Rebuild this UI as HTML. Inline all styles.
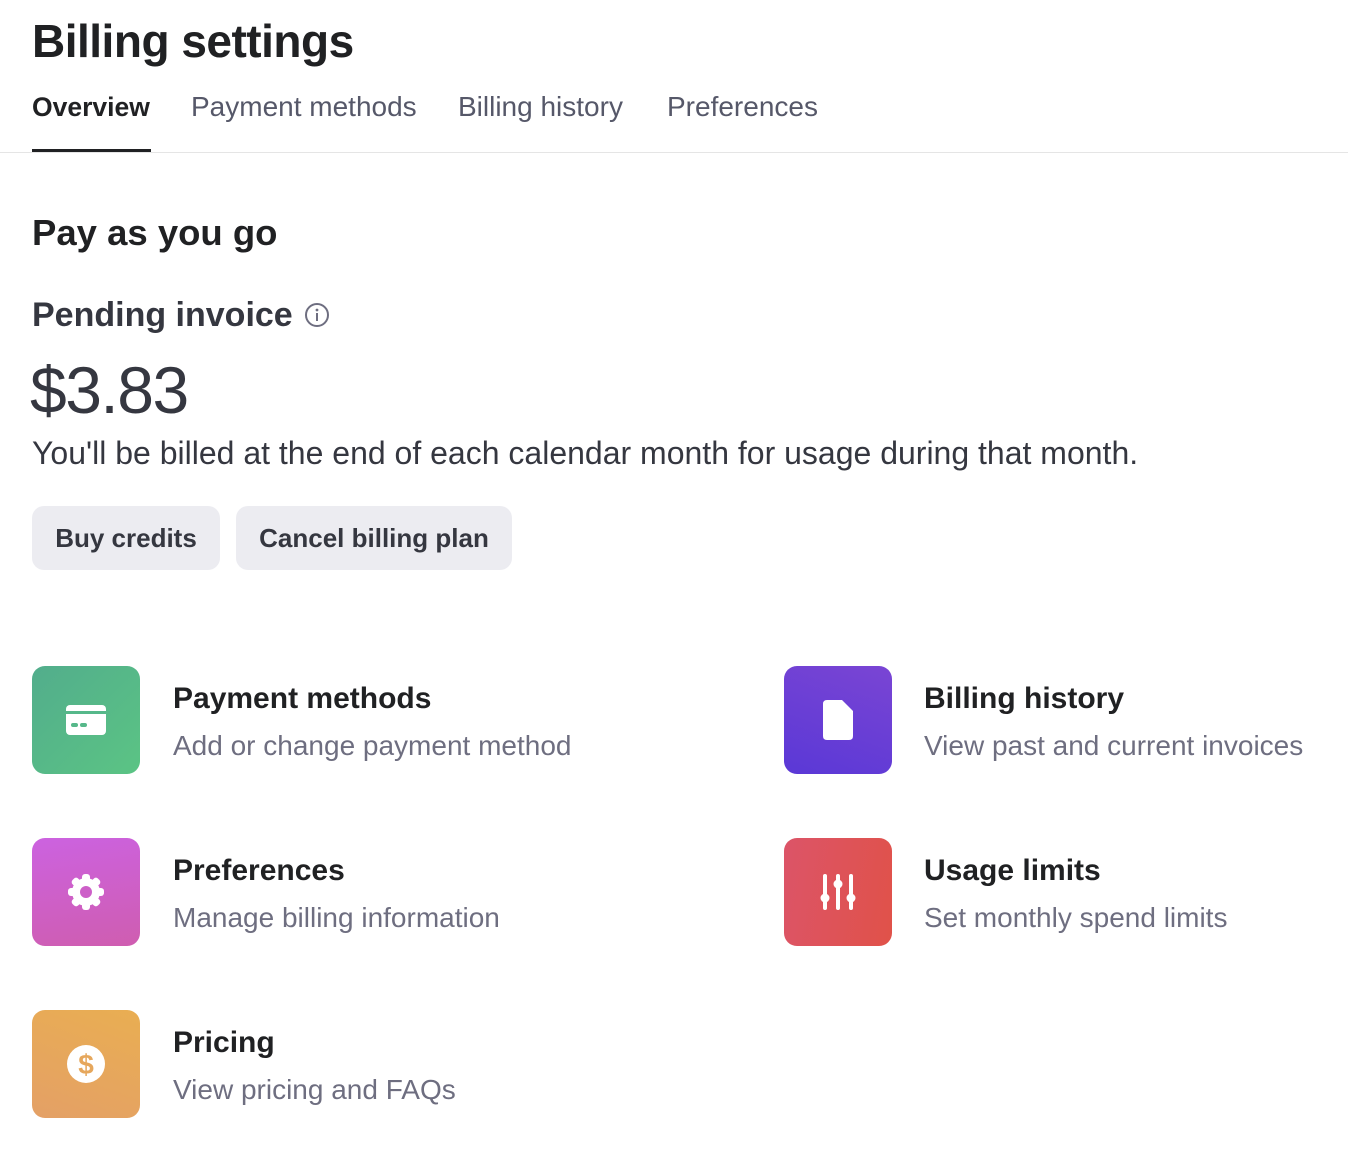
<!DOCTYPE html><html><head><style>
body{margin:0;width:1348px;height:1166px;background:#fff;font-family:"Liberation Sans",sans-serif;color:#202123;position:relative;overflow:hidden}
.a{position:absolute;white-space:nowrap}
.ic{position:absolute;width:108px;height:108px;border-radius:13px;display:flex;align-items:center;justify-content:center}
.t{font-size:30px;font-weight:bold;color:#202123}
.s{font-size:28px;color:#6e6e80}
.btn{position:absolute;top:506px;height:64px;border-radius:12px;background:#ececf1;font-size:26px;font-weight:bold;line-height:64px;text-align:center;color:#353740}
</style></head><body>
<div class="a" style="left:32px;top:14px;font-size:46px;font-weight:bold;letter-spacing:-0.5px">Billing settings</div>
<div class="a" style="left:32px;top:92px;font-size:26.5px;font-weight:bold">Overview</div>
<div class="a" style="left:191px;top:91px;font-size:28px;color:#565869">Payment methods</div>
<div class="a" style="left:458px;top:91px;font-size:28px;color:#565869">Billing history</div>
<div class="a" style="left:667px;top:91px;font-size:28px;color:#565869">Preferences</div>
<div class="a" style="left:32px;top:149px;width:119px;height:3px;background:#202123"></div>
<div class="a" style="left:0;top:152px;width:1348px;height:1px;background:#e5e5e5"></div>
<div class="a" style="left:32px;top:212px;font-size:36.5px;font-weight:bold">Pay as you go</div>
<div class="a" style="left:32px;top:296px;font-size:34px;font-weight:bold;color:#353740">Pending invoice</div>
<svg class="a" style="left:304px;top:302px" width="26" height="26" viewBox="0 0 26 26"><circle cx="13" cy="13" r="11" fill="none" stroke="#6e6e80" stroke-width="2"/><rect x="12" y="11" width="2" height="8" fill="#6e6e80"/><circle cx="13" cy="8" r="1.4" fill="#6e6e80"/></svg>
<div class="a" style="left:30px;top:352px;font-size:66px;color:#353740;letter-spacing:-1.5px">$3.83</div>
<div class="a" style="left:32px;top:435px;font-size:32px;color:#353740">You'll be billed at the end of each calendar month for usage during that month.</div>
<div class="btn" style="left:32px;width:188px">Buy credits</div>
<div class="btn" style="left:236px;width:276px">Cancel billing plan</div>

<div class="ic" style="left:32px;top:666px;background:linear-gradient(135deg,#52ad8c,#5bc484)"><svg width="40" height="30" viewBox="0 0 40 30"><rect x="0" y="0" width="40" height="30" rx="4" fill="#fff"/><rect x="0" y="6" width="40" height="3" fill="#56b88a"/><rect x="5" y="18" width="7" height="4" rx="2" fill="#56b88a"/><rect x="14" y="18" width="7" height="4" rx="2" fill="#56b88a"/></svg></div>
<div class="a t" style="left:173px;top:682px">Payment methods</div>
<div class="a s" style="left:173px;top:730px">Add or change payment method</div>

<div class="ic" style="left:784px;top:666px;background:linear-gradient(200deg,#7a45d4,#5a38d6)"><svg width="30" height="40" viewBox="0 0 30 40"><path d="M4 0H19L30 11V36Q30 40 26 40H4Q0 40 0 36V4Q0 0 4 0Z" fill="#fff"/></svg></div>
<div class="a t" style="left:924px;top:682px">Billing history</div>
<div class="a s" style="left:924px;top:730px">View past and current invoices</div>

<div class="ic" style="left:32px;top:838px;background:linear-gradient(170deg,#cc62e0,#cf5db0)"><svg width="40" height="40" viewBox="0 0 40 40"><g fill="#fff"><circle cx="20" cy="20" r="14"/><g id="k"><rect x="16" y="2" width="8" height="8" rx="3"/><rect x="16" y="30" width="8" height="8" rx="3"/></g><use href="#k" transform="rotate(45 20 20)"/><use href="#k" transform="rotate(90 20 20)"/><use href="#k" transform="rotate(135 20 20)"/></g><circle cx="20" cy="20" r="6" fill="#cd5fc8"/></svg></div>
<div class="a t" style="left:173px;top:854px">Preferences</div>
<div class="a s" style="left:173px;top:902px">Manage billing information</div>

<div class="ic" style="left:784px;top:838px;background:linear-gradient(100deg,#dc5468,#e05249)"><svg width="40" height="40" viewBox="0 0 40 40"><g fill="#fff"><rect x="5" y="2" width="4" height="36" rx="2"/><circle cx="7" cy="26" r="4.5"/><rect x="18" y="2" width="4" height="36" rx="2"/><circle cx="20" cy="12" r="4.5"/><rect x="31" y="2" width="4" height="36" rx="2"/><circle cx="33" cy="26" r="4.5"/></g></svg></div>
<div class="a t" style="left:924px;top:854px">Usage limits</div>
<div class="a s" style="left:924px;top:902px">Set monthly spend limits</div>

<div class="ic" style="left:32px;top:1010px;background:linear-gradient(200deg,#e9ae52,#e4a066)"><svg width="40" height="40" viewBox="0 0 40 40"><circle cx="20" cy="20" r="19" fill="#fff"/><text x="20" y="30" text-anchor="middle" font-family="Liberation Sans" font-weight="bold" font-size="28" fill="#e6a75c">$</text></svg></div>
<div class="a t" style="left:173px;top:1026px">Pricing</div>
<div class="a s" style="left:173px;top:1074px">View pricing and FAQs</div>
</body></html>
